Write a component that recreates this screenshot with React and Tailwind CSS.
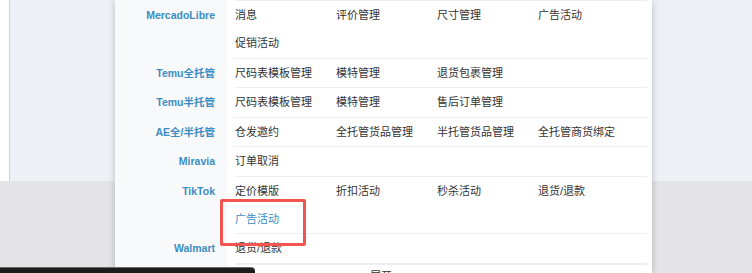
import React from 'react'

const rows = [
  { name: 'MercadoLibre', items: ['消息', '评价管理', '尺寸管理', '广告活动', '促销活动'] },
  { name: 'Temu全托管', items: ['尺码表模板管理', '模特管理', '退货包裹管理'] },
  { name: 'Temu半托管', items: ['尺码表模板管理', '模特管理', '售后订单管理'] },
  { name: 'AE全/半托管', items: ['仓发邀约', '全托管货品管理', '半托管货品管理', '全托管商货绑定'] },
  { name: 'Miravia', items: ['订单取消'] },
  { name: 'TikTok', items: ['定价模版', '折扣活动', '秒杀活动', '退货/退款', '广告活动'], active: '广告活动' },
  { name: 'Walmart', items: ['退货/退款'], thick: true },
]

function MenuRow({ row }) {
  return (
    <div className="flex">
      <div className="w-[112px] shrink-0 pr-[12px] text-right text-[10.5px] font-bold leading-[28px] text-[#3b8dc2]">
        {row.name}
      </div>
      <div className="flex-1 pl-[8px] pr-[5px]">
        <div
          className={
            row.thick
              ? 'grid grid-cols-[101px_101px_101px_101px] pb-[0.5px] border-b-2 border-[#eeeff4]'
              : 'grid grid-cols-[101px_101px_101px_101px] pb-[0.5px] border-b border-[#eceef1]'
          }
        >
          {row.items.map((it, i) => (
            <div
              key={i}
              className={
                row.active === it && i > 3
                  ? 'text-[11px] leading-[28px] text-[#3b8dc2] whitespace-nowrap'
                  : 'text-[11px] leading-[28px] text-[#333] whitespace-nowrap'
              }
            >
              {it}
            </div>
          ))}
        </div>
      </div>
    </div>
  )
}

export default function App() {
  return (
    <div
      className="relative w-[752px] h-[273px] overflow-hidden flex flex-col"
      style={{ fontFamily: '"Liberation Sans", "Noto Sans CJK SC", sans-serif' }}
    >
      {/* page behind the dropdown */}
      <div className="flex h-[181px]">
        <div className="w-[10px] bg-white border-r border-[#cfd1d5]" />
        <div className="flex-1 bg-[#edf0f5]" />
      </div>
      <div className="flex-1 bg-[#e4e4e7]" />

      {/* dropdown panel */}
      <div className="absolute left-[115px] top-0 bottom-0 w-[537px] flex flex-col bg-white shadow-[0_0_7px_rgba(0,0,0,0.22)]">
        <div className="absolute left-0 top-0 bottom-0 w-[112px] bg-[#f8f9fb]" />
        <div className="relative">
          <div className="flex">
            <div className="w-[112px] shrink-0" />
            <div className="flex-1 pl-[8px] pr-[5px]">
              <div className="border-b border-[#eceef1]" />
            </div>
          </div>
          {rows.map((r) => (
            <MenuRow key={r.name} row={r} />
          ))}
          <div className="flex">
            <div className="w-[112px] shrink-0" />
            <div className="flex-1 pl-[143px] text-[11px] leading-[14px] pt-[4px] text-[#333]">
              展开
            </div>
          </div>
        </div>
        {/* highlight box */}
        <div className="absolute left-[105px] top-[199px] w-[86px] h-[47px] border-[3px] border-[#f25450] rounded-[2px]" />
      </div>

      {/* dark bar at bottom */}
      <div className="absolute left-0 top-[267px] w-[255px] h-[10px] bg-[#1c1c1c] border-t border-[#6a6a6a] rounded-tr-[4px]" />
    </div>
  )
}
